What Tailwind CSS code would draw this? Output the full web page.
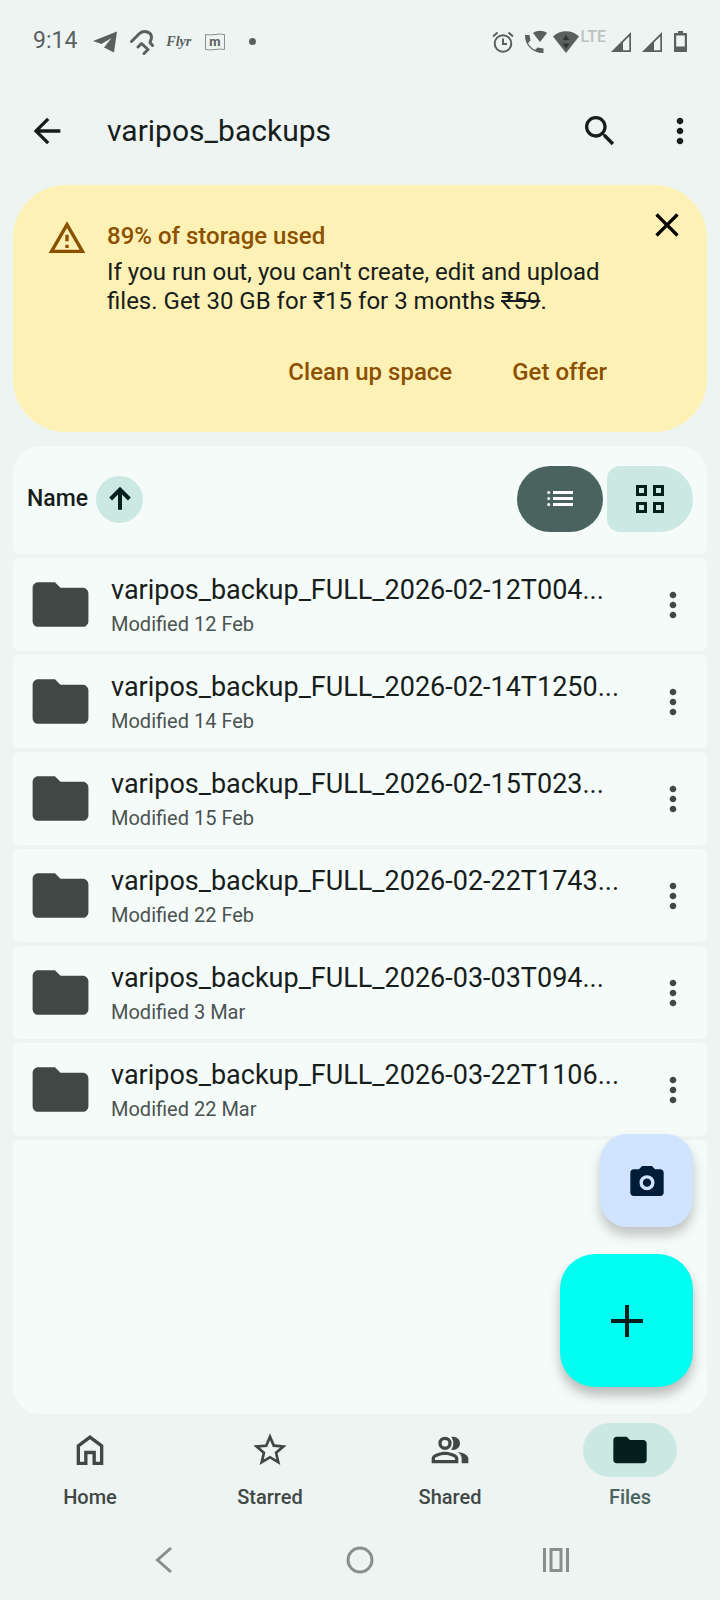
<!DOCTYPE html>
<html lang="en">
<head>
    <meta charset="UTF-8">
    <meta name="viewport" content="width=device-width, initial-scale=1.0">
    <title>varipos_backups</title>
    <script src="https://cdn.jsdelivr.net/npm/@tailwindcss/browser@4"></script>
</head>
<body class="bg-[#eef4f2] font-['Roboto',sans-serif] text-[#171d1b]">
    <!-- Shared icons -->
    <svg class="hidden">
        <symbol id="more" viewBox="0 0 24 24"><path d="M12 8c1.100 0 2-.9 2-2s-.9-2-2-2-2 .9-2 2 .9 2 2 2zm0 2c-1.100 0-2 .9-2 2s.9 2 2 2 2-.9 2-2-.9-2-2-2zm0 6c-1.100 0-2 .9-2 2s.9 2 2 2 2-.9 2-2-.9-2-2-2z"/></symbol>
        <symbol id="folder" viewBox="0 0 24 24"><path d="M10 4H4c-1.100 0-1.990.9-1.990 2L2 18c0 1.100.9 2 2 2h16c1.100 0 2-.9 2-2V8c0-1.100-.9-2-2-2h-8l-2-2z"/></symbol>
        <symbol id="signal" viewBox="0 0 20 20"><path d="M0 20 20 0V20ZM12 10.500V18.200H18.300V4.300Z" fill-rule="evenodd"/></symbol>
    </svg>

    <div class="min-h-screen flex flex-col">
        <!-- Status Bar -->
        <div class="flex items-center justify-between h-[83px] px-[33px] text-[#5a605e]">
            <div class="flex items-center">
                <span class="text-[23px]">9:14</span>
                <svg class="w-6 h-6 ml-4" viewBox="0 0 24 24" fill="currentColor"><path d="M0 11 24 1.500 21 22.500 11 17.500 18.500 8 8.500 14Z"/></svg>
                <svg class="w-6 h-[26px] ml-[13px] overflow-visible" viewBox="0 0 24 26" fill="none" stroke="currentColor" stroke-width="3" stroke-linecap="round" stroke-linejoin="round"><path d="M1.500 12.500 9.500 4.500C14 .5 22 3 21.500 9L20 13.500 22.500 16.500"/><path d="M8 18 11.500 14.500 18 20.500 14 24.500"/></svg>
                <span class="ml-3 font-['Liberation_Serif',serif] text-sm font-bold italic">Flyr</span>
                <svg class="w-5 h-[18px] ml-[14px]" viewBox="0 0 20 18" fill="none" stroke="#8b908e"><path d="M.5 1.500C7 3 13 0 19.500 1.500V16.500C13 15 7 18 .5 16.500Z"/><text x="10" y="13" text-anchor="middle" font-size="13" font-weight="700" fill="#5a605e" stroke="none">m</text></svg>
                <span class="w-[7px] h-[7px] ml-6 rounded-full bg-current"></span>
            </div>
            <div class="flex items-center">
                <svg class="w-[22px] h-[22px]" viewBox="0 0 22 22" fill="none" stroke="currentColor" stroke-width="2"><circle cx="11" cy="12.500" r="8.300"/><path d="M11 7.500V13H15M1 5.500 5.500 1.500M21 5.500 16.500 1.500"/></svg>
                <svg class="w-[23px] h-6 ml-[10px]" viewBox="0 0 23 24" fill="currentColor"><path d="M1 5H5.500L6.500 10.500 4 13C5.500 16 8 18.500 11 20L13.500 17.500 19.500 18.500V23C9 23.500.5 15 1 5Z"/><path d="M9 3C13 0 19 0 23 3L16 12Z"/></svg>
                <svg class="w-[26px] h-[22px] ml-[6px]" viewBox="0 0 26 22" fill="currentColor"><path d="M0 5.500C7-1.500 19-1.500 26 5.500L13 22Z"/><path d="M9.500 9 13 4 16.500 9ZM9.500 12.500H16.500L13 17.500Z" fill="#303634"/></svg>
                <span class="ml-[2px] mb-[10px] text-base leading-4 text-[#bcc1bf] font-medium">LTE</span>
                <svg class="w-5 h-5 ml-[5px]" fill="currentColor"><use href="#signal"/></svg>
                <svg class="w-5 h-5 ml-[11px]" fill="currentColor"><use href="#signal"/></svg>
                <svg class="w-[13px] h-[21px] ml-3" viewBox="0 0 13 21" fill="currentColor"><path d="M4 0H9V2H12C12.600 2 13 2.400 13 3V20C13 20.600 12.600 21 12 21H1C.4 21 0 20.600 0 20V3C0 2.400.4 2 1 2H4ZM2.200 4.500V15.500H10.800V4.500Z" fill-rule="evenodd"/></svg>
            </div>
        </div>

        <!-- App Bar -->
        <header class="flex items-center h-[102px] pl-[27px] pr-5 pb-[6px]">
            <button aria-label="Back" class="w-10 h-10"><svg class="w-10 h-10" viewBox="0 0 24 24" fill="currentColor"><path d="M20 11H7.830l5.590-5.590L12 4l-8 8 8 8 1.410-1.410L7.830 13H20v-2z"/></svg></button>
            <h1 class="flex-1 ml-10 text-3xl">varipos_backups</h1>
            <button aria-label="Search" class="w-10 h-10 mr-10"><svg class="w-10 h-10" viewBox="0 0 24 24" fill="currentColor"><path d="M15.500 14h-.79l-.28-.27C15.410 12.590 16 11.110 16 9.500 16 5.910 13.090 3 9.500 3S3 5.910 3 9.500 5.910 16 9.500 16c1.610 0 3.090-.59 4.230-1.570l.27.28v.79l5 4.990L20.490 19l-4.990-5zm-6 0C7.010 14 5 11.990 5 9.500S7.010 5 9.500 5 14 7.010 14 9.500 11.990 14 9.500 14z"/></svg></button>
            <button aria-label="More options" class="w-10 h-10"><svg class="w-10 h-10" fill="currentColor"><use href="#more"/></svg></button>
        </header>

        <main class="flex-1 flex flex-col px-[13px]">
            <!-- Storage Banner -->
            <section class="flex items-start h-[247px] pl-[34px] pr-5 rounded-[53px] bg-[#fef1b5]">
                <svg class="w-10 h-10 mt-[33px] mr-5 shrink-0 text-[#8b5000]" viewBox="0 0 24 24" fill="currentColor"><path d="M12 5.990 19.530 19H4.470L12 5.990M12 2 1 21h22L12 2zm1 14h-2v2h2v-2zm0-6h-2v4h2v-4z"/></svg>
                <div class="flex-1 pt-[35px]">
                    <h2 class="text-2xl leading-8 font-medium text-[#8b5000]">89% of storage used</h2>
                    <p class="mt-[6px] text-2xl leading-[29px]">If you run out, you can't create, edit and upload files. Get 30 GB for ₹15 for 3 months <s>₹59</s>.</p>
                    <div class="flex justify-end gap-[60px] mt-10 pr-11 text-2xl leading-8 font-medium text-[#8b5000]">
                        <button>Clean up space</button>
                        <button>Get offer</button>
                    </div>
                </div>
                <button aria-label="Dismiss" class="w-10 h-10 mt-5 -ml-1"><svg class="w-10 h-10" viewBox="0 0 24 24" fill="#000"><path d="M19 6.410 17.590 5 12 10.590 6.410 5 5 6.410 10.590 12 5 17.590 6.410 19 12 13.410 17.590 19 19 17.590 13.410 12z"/></svg></button>
            </section>

            <!-- File List -->
            <section class="relative flex-1 flex flex-col gap-1 mt-[14px]">
                <div class="flex items-center h-[108px] px-[14px] pb-[2px] rounded-t-[27px] rounded-b-md bg-[#f5fbf9]">
                    <span class="text-[23px] font-medium">Name</span>
                    <button aria-label="Sort ascending" class="flex items-center justify-center w-[47px] h-[47px] ml-2 rounded-full bg-[#cce8e3]">
                        <svg class="w-8 h-8" viewBox="0 0 24 24" fill="none" stroke="#051f1c" stroke-width="3"><path d="M12 20V5.500M5 12 12 5 19 12"/></svg>
                    </button>
                    <div class="flex gap-1 ml-auto">
                        <button aria-label="List view" class="flex items-center justify-center w-[86px] h-[66px] rounded-full bg-[#4a635f]">
                            <svg class="w-[26px] h-4" viewBox="0 0 26 16" fill="#fff"><path d="M6 0H26V3H6ZM6 6H26V9H6ZM6 12H26V15H6Z"/><circle cx="1.700" cy="1.500" r="1.500"/><circle cx="1.700" cy="7.500" r="1.500"/><circle cx="1.700" cy="13.500" r="1.500"/></svg>
                        </button>
                        <button aria-label="Grid view" class="flex items-center justify-center w-[86px] h-[66px] rounded-l-[13px] rounded-r-[33px] bg-[#cce8e3]">
                            <svg class="w-7 h-7" viewBox="0 0 28 28" fill="none" stroke="#051f1c" stroke-width="3"><path d="M1.500 1.500H9.500V9.500H1.500ZM18.500 1.500H26.500V9.500H18.500ZM1.500 18.500H9.500V26.500H1.500ZM18.500 18.500H26.500V26.500H18.500Z"/></svg>
                        </button>
                    </div>
                </div>

                <ul class="flex flex-col gap-1">
                    <li class="flex items-center h-[93px] px-[14px] rounded-md bg-[#f5fbf9]">
                        <svg class="w-[67px] h-[67px] mr-[17px] text-[#404846]" fill="currentColor"><use href="#folder"/></svg>
                        <div class="flex-1 pt-[3px]">
                            <p class="text-[27px] leading-9">varipos_backup_FULL_2026-02-12T004...</p>
                            <p class="text-xl leading-8 text-[#4b5351]">Modified 12 Feb</p>
                        </div>
                        <button aria-label="More options" class="w-10 h-10"><svg class="w-10 h-10 text-[#404846]" fill="currentColor"><use href="#more"/></svg></button>
                    </li>
                    <li class="flex items-center h-[93px] px-[14px] rounded-md bg-[#f5fbf9]">
                        <svg class="w-[67px] h-[67px] mr-[17px] text-[#404846]" fill="currentColor"><use href="#folder"/></svg>
                        <div class="flex-1 pt-[3px]">
                            <p class="text-[27px] leading-9">varipos_backup_FULL_2026-02-14T1250...</p>
                            <p class="text-xl leading-8 text-[#4b5351]">Modified 14 Feb</p>
                        </div>
                        <button aria-label="More options" class="w-10 h-10"><svg class="w-10 h-10 text-[#404846]" fill="currentColor"><use href="#more"/></svg></button>
                    </li>
                    <li class="flex items-center h-[93px] px-[14px] rounded-md bg-[#f5fbf9]">
                        <svg class="w-[67px] h-[67px] mr-[17px] text-[#404846]" fill="currentColor"><use href="#folder"/></svg>
                        <div class="flex-1 pt-[3px]">
                            <p class="text-[27px] leading-9">varipos_backup_FULL_2026-02-15T023...</p>
                            <p class="text-xl leading-8 text-[#4b5351]">Modified 15 Feb</p>
                        </div>
                        <button aria-label="More options" class="w-10 h-10"><svg class="w-10 h-10 text-[#404846]" fill="currentColor"><use href="#more"/></svg></button>
                    </li>
                    <li class="flex items-center h-[93px] px-[14px] rounded-md bg-[#f5fbf9]">
                        <svg class="w-[67px] h-[67px] mr-[17px] text-[#404846]" fill="currentColor"><use href="#folder"/></svg>
                        <div class="flex-1 pt-[3px]">
                            <p class="text-[27px] leading-9">varipos_backup_FULL_2026-02-22T1743...</p>
                            <p class="text-xl leading-8 text-[#4b5351]">Modified 22 Feb</p>
                        </div>
                        <button aria-label="More options" class="w-10 h-10"><svg class="w-10 h-10 text-[#404846]" fill="currentColor"><use href="#more"/></svg></button>
                    </li>
                    <li class="flex items-center h-[93px] px-[14px] rounded-md bg-[#f5fbf9]">
                        <svg class="w-[67px] h-[67px] mr-[17px] text-[#404846]" fill="currentColor"><use href="#folder"/></svg>
                        <div class="flex-1 pt-[3px]">
                            <p class="text-[27px] leading-9">varipos_backup_FULL_2026-03-03T094...</p>
                            <p class="text-xl leading-8 text-[#4b5351]">Modified 3 Mar</p>
                        </div>
                        <button aria-label="More options" class="w-10 h-10"><svg class="w-10 h-10 text-[#404846]" fill="currentColor"><use href="#more"/></svg></button>
                    </li>
                    <li class="flex items-center h-[93px] px-[14px] rounded-md bg-[#f5fbf9]">
                        <svg class="w-[67px] h-[67px] mr-[17px] text-[#404846]" fill="currentColor"><use href="#folder"/></svg>
                        <div class="flex-1 pt-[3px]">
                            <p class="text-[27px] leading-9">varipos_backup_FULL_2026-03-22T1106...</p>
                            <p class="text-xl leading-8 text-[#4b5351]">Modified 22 Mar</p>
                        </div>
                        <button aria-label="More options" class="w-10 h-10"><svg class="w-10 h-10 text-[#404846]" fill="currentColor"><use href="#more"/></svg></button>
                    </li>
                </ul>

                <div class="flex-1 rounded-t-md rounded-b-[27px] bg-[#f5fbf9]"></div>

                <!-- Floating Buttons -->
                <div class="absolute right-[14px] bottom-[27px] flex flex-col items-end gap-[27px]">
                    <button aria-label="Scan" class="flex items-center justify-center w-[93px] h-[93px] rounded-[27px] bg-[#d0e4ff] shadow-[0_8px_12px_rgba(0,0,0,0.22)]">
                        <svg class="w-10 h-10" viewBox="0 0 24 24" fill="#001d35"><path d="M9 3 7.170 5H4c-1.100 0-2 .9-2 2v12c0 1.100.9 2 2 2h16c1.100 0 2-.9 2-2V7c0-1.100-.9-2-2-2h-3.170L15 3H9z"/><circle cx="12" cy="13" r="3.500" fill="none" stroke="#d0e4ff" stroke-width="2"/></svg>
                    </button>
                    <button aria-label="New" class="flex items-center justify-center w-[133px] h-[133px] rounded-[35px] bg-[#00fff0] shadow-[0_8px_12px_rgba(0,0,0,0.25)]">
                        <svg class="w-8 h-8" viewBox="0 0 32 32" fill="none" stroke="#05201c" stroke-width="4"><path d="M16 0V32M0 16H32"/></svg>
                    </button>
                </div>
            </section>
        </main>

        <!-- Bottom Navigation -->
        <nav class="grid grid-cols-4 pt-[9px] text-xl leading-6 font-medium text-[#404846]">
            <a href="#" class="flex flex-col items-center gap-2">
                <span class="flex items-center justify-center w-[94px] h-[54px]"><svg class="w-10 h-10" viewBox="0 0 24 24" fill="none" stroke="currentColor" stroke-width="2"><path d="M5 20V9.500L12 4.250 19 9.500V20H14.500V13.500H9.500V20Z"/></svg></span>
                Home
            </a>
            <a href="#" class="flex flex-col items-center gap-2">
                <span class="flex items-center justify-center w-[94px] h-[54px]"><svg class="w-10 h-10" viewBox="0 0 24 24" fill="currentColor"><path d="m22 9.240-7.190-.62L12 2 9.190 8.630 2 9.240l5.460 4.730L5.820 21 12 17.270 18.180 21l-1.630-7.030L22 9.240zM12 15.400l-3.760 2.270 1-4.280-3.320-2.880 4.380-.38L12 6.100l1.710 4.040 4.380.38-3.320 2.880 1 4.280L12 15.400z"/></svg></span>
                Starred
            </a>
            <a href="#" class="flex flex-col items-center gap-2">
                <span class="flex items-center justify-center w-[94px] h-[54px]"><svg class="w-10 h-10" viewBox="0 0 24 24" fill="currentColor"><circle cx="9" cy="8" r="3" fill="none" stroke="currentColor" stroke-width="2"/><path d="M9 13c-2.670 0-8 1.340-8 4v3h16v-3c0-2.660-5.330-4-8-4zm6 5H3v-.99C3.200 16.290 6.300 15 9 15s5.800 1.290 6 2v1zM14 12c2.210 0 4-1.790 4-4s-1.790-4-4-4c-.47 0-.91.1-1.330.24C13.500 5.270 14 6.580 14 8s-.5 2.730-1.330 3.760c.42.14.86.24 1.330.24zM16.670 13.130C18.040 14.060 19 15.320 19 17v3h4v-3c0-2.180-3.570-3.470-6.330-3.870z"/></svg></span>
                Shared
            </a>
            <a href="#" class="flex flex-col items-center gap-2 text-[#4a635f]">
                <span class="flex items-center justify-center w-[94px] h-[54px] rounded-full bg-[#cce8e3]"><svg class="w-10 h-10" fill="#051f1c"><use href="#folder"/></svg></span>
                Files
            </a>
        </nav>

        <!-- System Navigation -->
        <div class="grid grid-cols-3 justify-items-center mt-[31px] mb-5 px-[66px] text-[#8a8f8d]">
            <button aria-label="System back" class="w-10 h-10"><svg class="w-10 h-10" viewBox="0 0 40 40" fill="none" stroke="currentColor" stroke-width="3"><path d="M27 8 13.500 20 27 32"/></svg></button>
            <button aria-label="System home" class="w-10 h-10"><svg class="w-10 h-10" viewBox="0 0 40 40" fill="none" stroke="currentColor" stroke-width="3"><circle cx="20" cy="20" r="12"/></svg></button>
            <button aria-label="Recent apps" class="w-10 h-10"><svg class="w-10 h-10" viewBox="0 0 40 40" fill="none" stroke="currentColor" stroke-width="3"><path d="M8.500 8V32M31.500 8V32M15 9.500H25V30.500H15Z"/></svg></button>
        </div>
    </div>
</body>
</html>
